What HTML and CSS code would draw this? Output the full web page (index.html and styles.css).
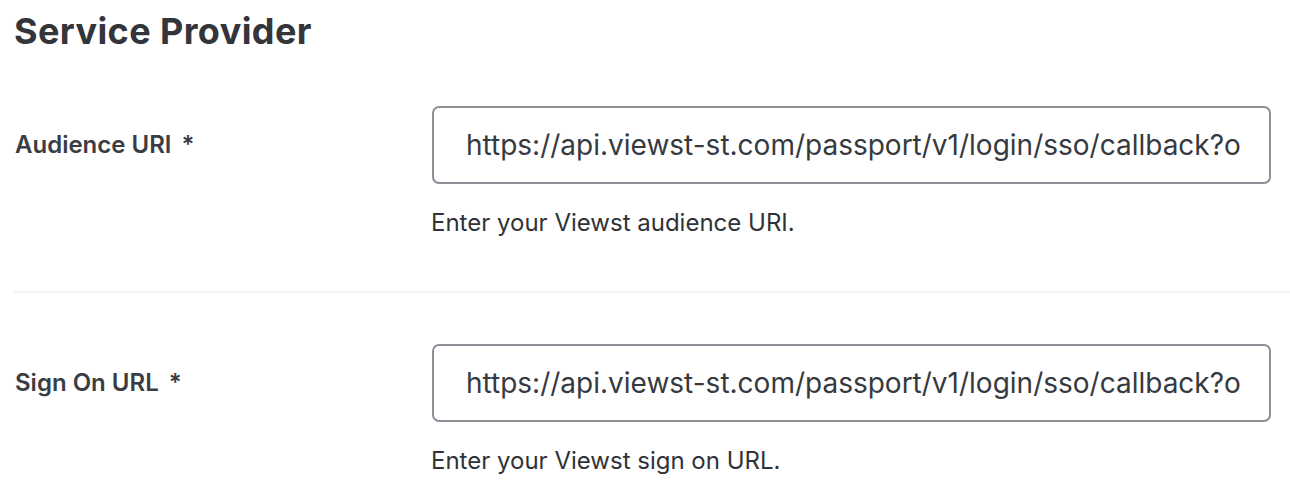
FILE: index.html
```html
<!DOCTYPE html>
<html>
<head>
<meta charset="utf-8">
<link rel="stylesheet" href="styles.css">
</head>
<body>
<div class="page">
  <h1 class="title">Service Provider</h1>
  <div class="row">
    <label class="label">Audience URI <span class="req">*</span></label>
    <div class="field">
      <div class="input">https://api.viewst-st.com/passport/v1/login/sso/callback?o</div>
      <div class="help">Enter your Viewst audience URI.</div>
    </div>
  </div>
  <div class="divider"></div>
  <div class="row last">
    <label class="label">Sign On URL <span class="req">*</span></label>
    <div class="field">
      <div class="input">https://api.viewst-st.com/passport/v1/login/sso/callback?o</div>
      <div class="help">Enter your Viewst sign on URL.</div>
    </div>
  </div>
</div>
</body>
</html>
```
FILE: styles.css
```css
html, body {
  margin: 0;
  padding: 0;
  background: #ffffff;
}
.page {
  padding-left: 14px;
  font-family: "Inter", "Noto Sans", sans-serif;
  color: #363a40;
}
.title {
  margin: 0;
  padding-top: 10px;
  height: 43px;
  font-size: 36px;
  line-height: 42px;
  font-weight: 700;
  color: #33353b;
  letter-spacing: 0.4px;
}
.row {
  display: grid;
  grid-template-columns: 418px 839px;
  padding-top: 53px;
  padding-bottom: 54px;
}
.divider + .row {
  padding-top: 51px;
}
.row.last {
  padding-bottom: 12px;
}
.label {
  display: block;
  height: 78px;
  line-height: 78px;
  font-size: 24px;
  font-weight: 600;
  color: #3a3e44;
  padding-left: 1px;
}
.req {
  margin-left: 4px;
}
.field {
  display: flex;
  flex-direction: column;
}
.input {
  box-sizing: border-box;
  height: 78px;
  border: 2px solid #8b9097;
  border-radius: 7px;
  padding: 0 30px 0 32px;
  line-height: 74px;
  font-size: 28px;
  color: #363a40;
  white-space: nowrap;
}
.help {
  margin-top: 25px;
  font-size: 24px;
  line-height: 28px;
  color: #2f3338;
  margin-left: -1px;
}
.divider {
  height: 2px;
  background: #f3f3f3;
}
```
